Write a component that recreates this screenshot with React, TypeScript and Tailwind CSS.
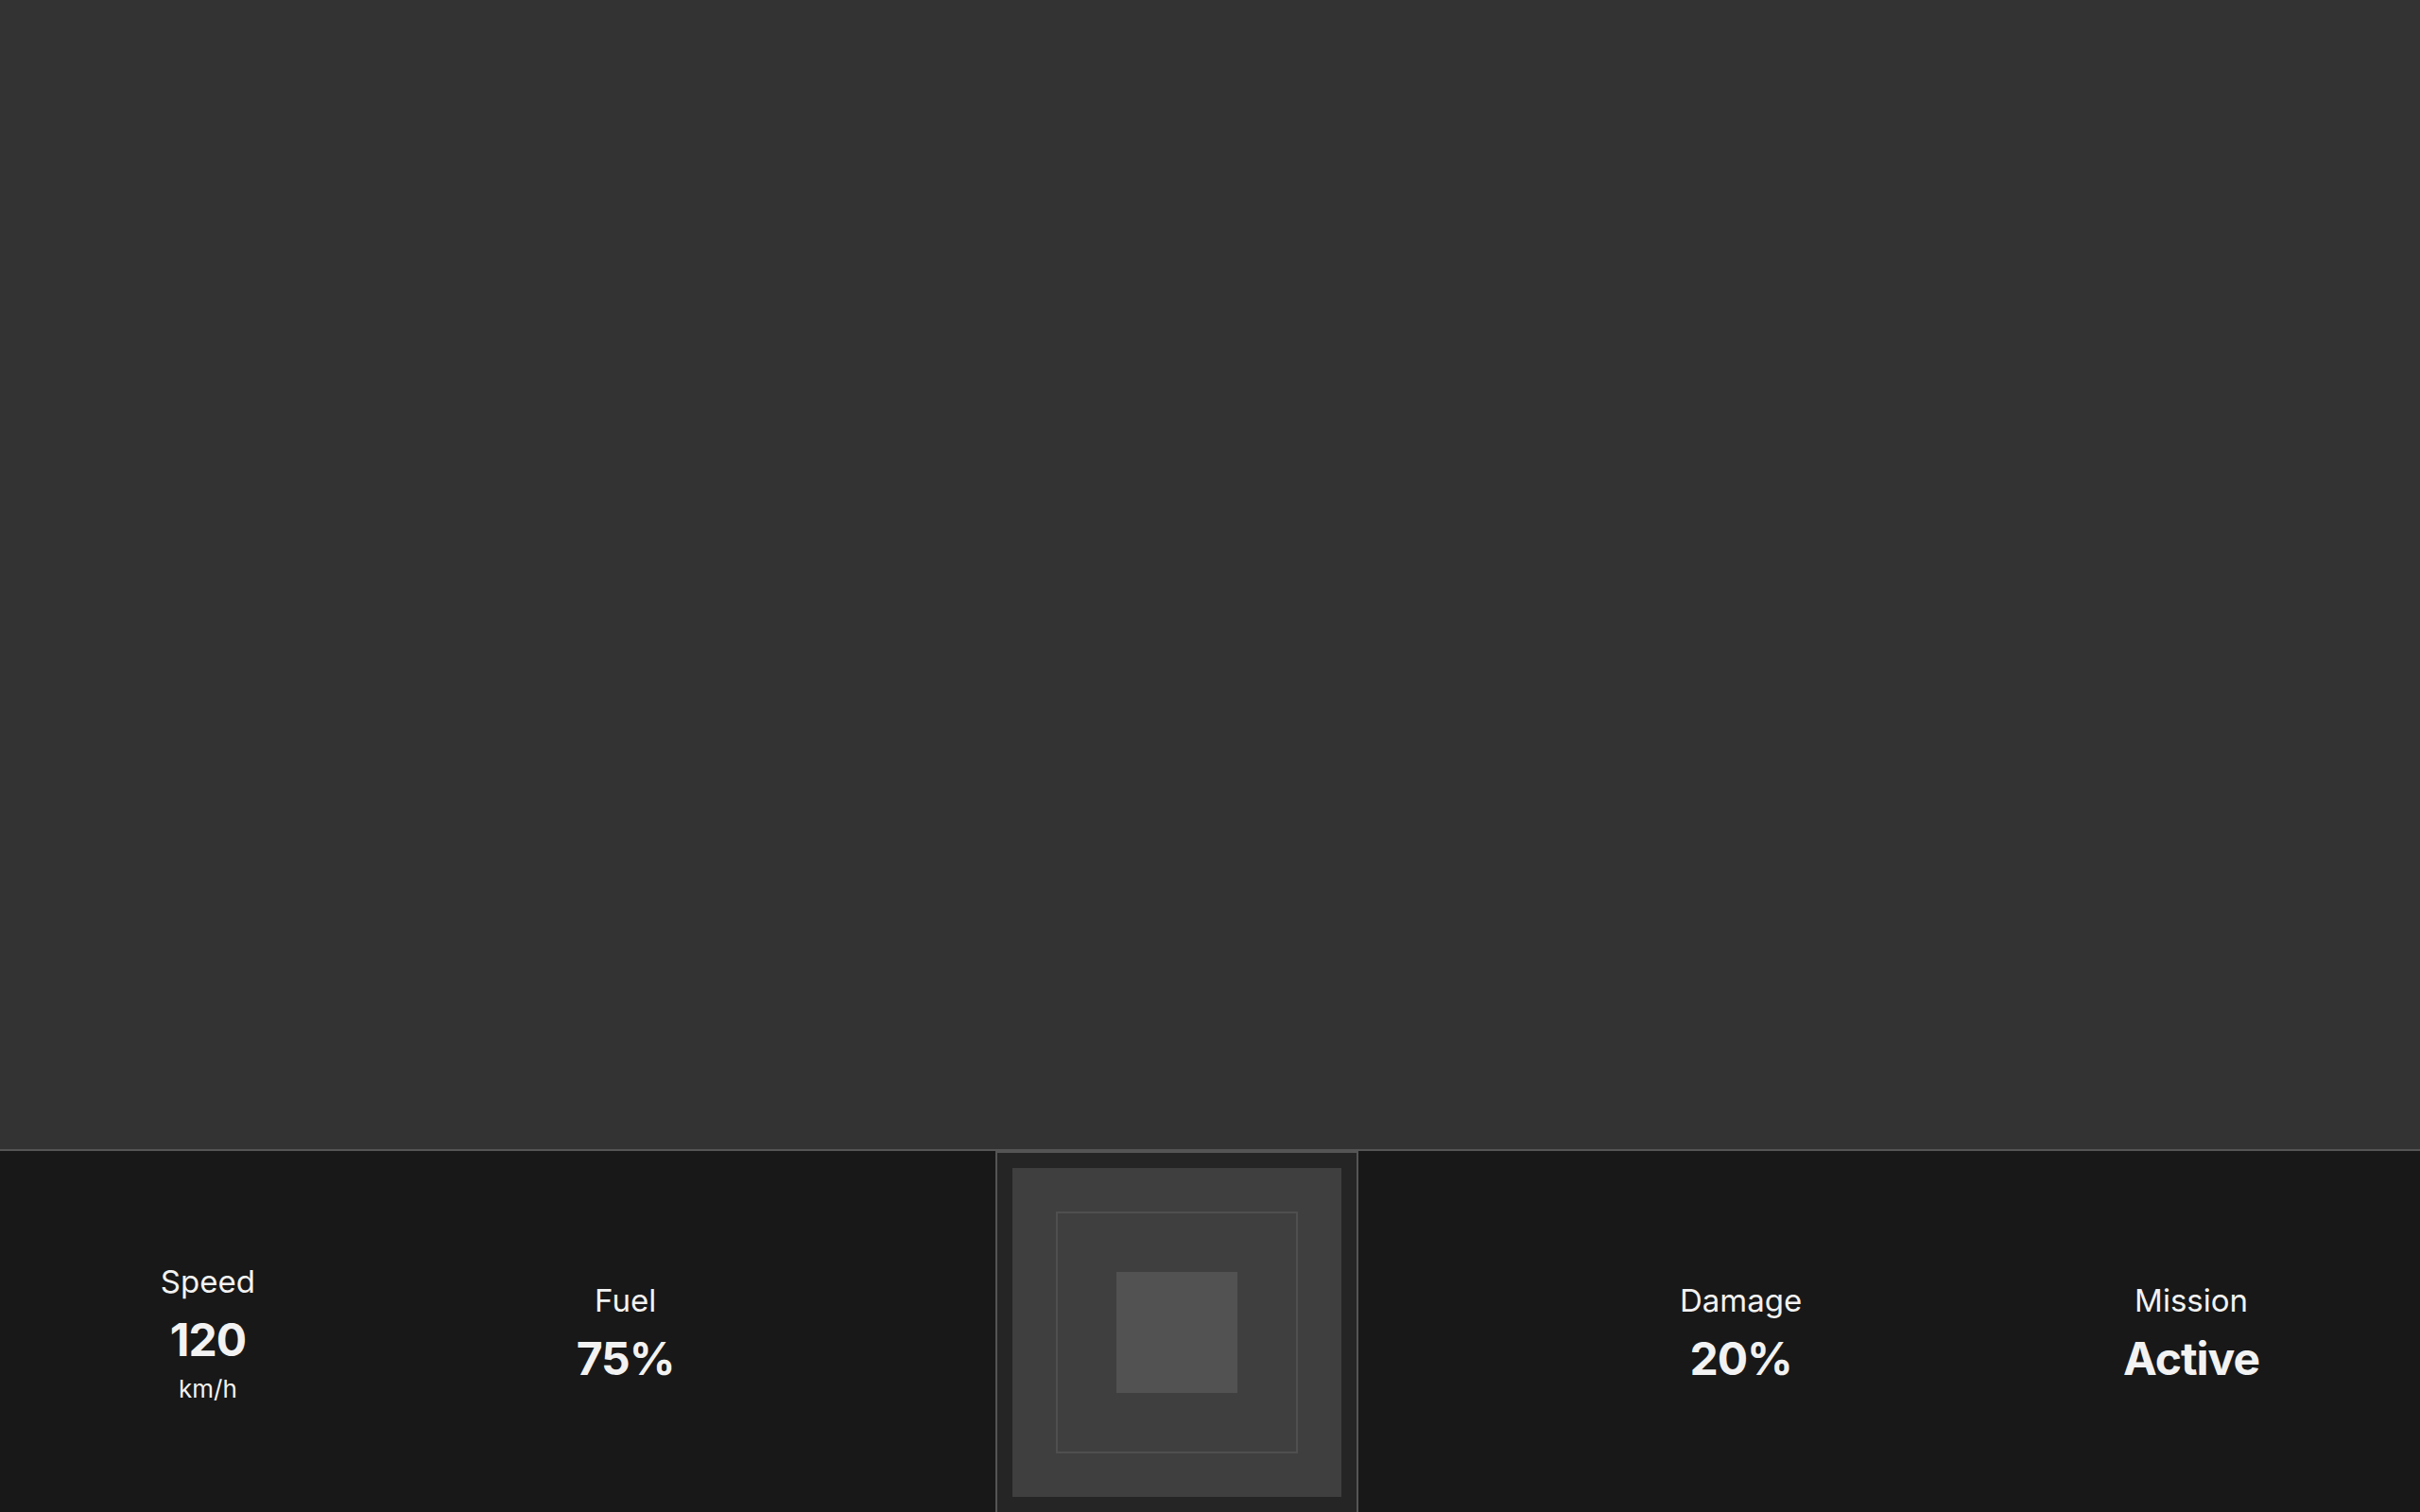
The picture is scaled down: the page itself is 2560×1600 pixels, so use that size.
import React from 'react';

interface Stat {
  label: string;
  value: string;
  unit?: string;
}

const LEFT_STATS: Stat[] = [
  { label: 'Speed', value: '120', unit: 'km/h' },
  { label: 'Fuel', value: '75%' },
];

const RIGHT_STATS: Stat[] = [
  { label: 'Damage', value: '20%' },
  { label: 'Mission', value: 'Active' },
];

function StatItem({ label, value, unit }: Stat) {
  return (
    <div className="flex flex-col items-center text-[#f2f2f2]">
      <span className="text-[33px] leading-[48px] mb-2">{label}</span>
      <span className="text-[48px] leading-[60px] font-bold tracking-[-1px]">{value}</span>
      {unit && <span className="text-[26px] leading-[36px] mt-1">{unit}</span>}
    </div>
  );
}

function MiniMap() {
  return (
    <div className="w-[384px] h-[384px] shrink-0 border-2 border-[#555555] bg-[#252525] p-4">
      <div className="w-full h-full bg-[#3f3f3f] flex items-center justify-center">
        <div className="w-[256px] h-[256px] border-2 border-[#4f4f4f] flex items-center justify-center">
          <div className="w-[128px] h-[128px] bg-[#525252]" />
        </div>
      </div>
    </div>
  );
}

export default function App() {
  return (
    <div className="h-screen overflow-hidden bg-[#333333]" style={{ fontFamily: 'Inter, "Noto Sans", sans-serif' }}>
      {/* Game view */}
      <div className="h-[1216px] bg-[#333333]" />

      {/* HUD bar */}
      <div className="h-[386px] border-t-2 border-[#555555] bg-[#181818] flex items-center justify-around">
        {LEFT_STATS.map(s => (
          <StatItem key={s.label} {...s} />
        ))}
        <MiniMap />
        {RIGHT_STATS.map(s => (
          <StatItem key={s.label} {...s} />
        ))}
      </div>
    </div>
  );
}
